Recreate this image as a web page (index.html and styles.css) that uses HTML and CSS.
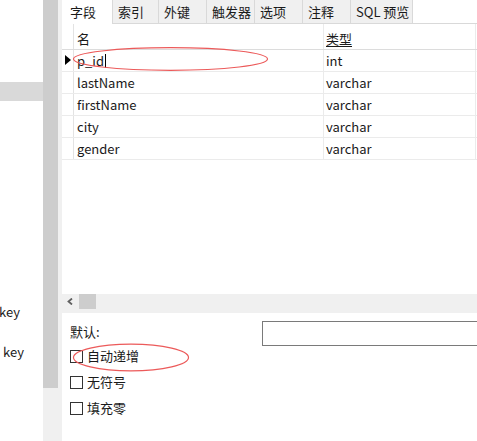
FILE: index.html
```html
<!DOCTYPE html>
<html>
<head>
<meta charset="utf-8">
<link rel="stylesheet" href="styles.css">
</head>
<body>
<div class="app">
  <div class="side">
    <div class="side-sel"></div>
    <div class="side-key k1">key</div>
    <div class="side-key k2">key</div>
  </div>
  <div class="vscroll"><div class="vthumb"></div></div>
  <div class="main">
    <div class="tabs">
      <div class="tab active">字段</div>
      <div class="tab t2">索引</div>
      <div class="tab t3">外键</div>
      <div class="tab t3">触发器</div>
      <div class="tab t3">选项</div>
      <div class="tab t3">注释</div>
      <div class="tab t4">SQL 预览</div>
      <div class="tab-rest"></div>
    </div>
    <div class="grid">
      <div class="row head">
        <div class="ind"></div>
        <div class="c-name">名</div>
        <div class="c-type"><span class="u">类型</span></div>
      </div>
      <div class="row">
        <div class="ind"><span class="tri"></span></div>
        <div class="c-name">p_id<span class="caret"></span></div>
        <div class="c-type">int</div>
      </div>
      <div class="row">
        <div class="ind"></div>
        <div class="c-name">lastName</div>
        <div class="c-type">varchar</div>
      </div>
      <div class="row">
        <div class="ind"></div>
        <div class="c-name">firstName</div>
        <div class="c-type">varchar</div>
      </div>
      <div class="row">
        <div class="ind"></div>
        <div class="c-name">city</div>
        <div class="c-type">varchar</div>
      </div>
      <div class="row">
        <div class="ind"></div>
        <div class="c-name">gender</div>
        <div class="c-type">varchar</div>
      </div>
    </div>
    <div class="hscroll">
      <svg class="harrow" width="6" height="7" viewBox="0 0 6 7"><path d="M5 0.5 L1.5 3.5 L5 6.5" fill="none" stroke="#606060" stroke-width="1.8"/></svg>
      <div class="hthumb"></div>
    </div>
    <div class="form">
      <div class="def-row">
        <div class="def-label">默认:</div>
        <div class="def-input"></div>
      </div>
      <label class="chk"><span class="box"></span>自动递增</label>
      <label class="chk"><span class="box"></span>无符号</label>
      <label class="chk"><span class="box"></span>填充零</label>
    </div>
  </div>
  <svg class="notes" width="477" height="441" viewBox="0 0 477 441">
    <ellipse cx="170.5" cy="59" rx="97" ry="11.3" fill="none" stroke="#ec5a5a" stroke-width="1.2"/>
    <ellipse cx="131" cy="357.5" rx="57.5" ry="13.3" fill="none" stroke="#ec5a5a" stroke-width="1.2"/>
  </svg>
</div>
</body>
</html>
```
FILE: styles.css
```css
html, body {
  margin: 0;
  padding: 0;
  background: #fff;
}
body {
  font-family: "Noto Sans CJK SC", "Noto Sans", sans-serif;
  font-size: 13px;
  color: #1a1a1a;
}
.app {
  position: relative;
  display: flex;
  width: 477px;
  height: 441px;
  overflow: hidden;
}
.side {
  width: 43px;
  flex: none;
  background: #fff;
  display: flex;
  flex-direction: column;
}
.side-sel {
  margin-top: 82px;
  height: 19px;
  background: #d9d9d9;
}
.side-key {
  line-height: 16px;
  height: 16px;
}
.k1 { margin-top: 203px; margin-left: -1px; }
.k2 { margin-top: 24px; margin-left: 3px; }
.vscroll {
  width: 19px;
  flex: none;
  background: #f0f0f0;
}
.vthumb {
  width: 15px;
  height: 388px;
  background: #cdcdcd;
}
.main {
  width: 415px;
  flex: none;
  display: flex;
  flex-direction: column;
  background: #fff;
}
.tabs {
  display: flex;
  height: 24px;
  flex: none;
}
.tab {
  box-sizing: border-box;
  height: 24px;
  line-height: 23px;
  padding-left: 8px;
  background: #f0f0f0;
  border-right: 1px solid #d9d9d9;
  border-bottom: 1px solid #d9d9d9;
}
.tab.active {
  width: 51px;
  background: #fff;
  border-right: 1px solid #d9d9d9;
  border-bottom: none;
}
.t2 { width: 46px; padding-left: 5px; }
.t3 { width: 48px; padding-left: 5px; }
.t4 { width: 62px; padding-left: 5px; }
.tab-rest {
  flex: 1;
  box-sizing: border-box;
  border-bottom: 1px solid #d9d9d9;
}
.grid {
  height: 136px;
  flex: none;
}
.row {
  display: flex;
  box-sizing: border-box;
  height: 22px;
  border-bottom: 1px solid #ebebeb;
}
.row.head {
  height: 26px;
  border-bottom: 1px solid #dcdcdc;
}
.ind {
  width: 11px;
  flex: none;
  border-right: 1px solid #e3e3e3;
  position: relative;
}
.tri {
  position: absolute;
  left: 3px;
  top: 5px;
  width: 0;
  height: 0;
  border-top: 5px solid transparent;
  border-bottom: 5px solid transparent;
  border-left: 6px solid #000;
}
.c-name {
  width: 250px;
  flex: none;
  padding-left: 3px;
  box-sizing: border-box;
  border-right: 1px solid #ebebeb;
  line-height: 21px;
  display: flex;
  align-items: center;
}
.c-type {
  width: 152px;
  flex: none;
  box-sizing: border-box;
  padding-left: 2px;
  border-right: 1px solid #ebebeb;
  line-height: 21px;
}
.head .c-name, .head .c-type {
  line-height: 29px;
}
.head .c-name { align-items: stretch; }
.u {
  text-decoration: underline;
  text-underline-offset: 2px;
}
.caret {
  display: inline-block;
  width: 1px;
  height: 14px;
  background: #000;
  margin-left: 1px;
}
.hscroll {
  margin-top: 134px;
  height: 19px;
  flex: none;
  background: #f0f0f0;
  display: flex;
  align-items: flex-start;
}
.harrow {
  margin: 4px 0 0 5px;
}
.hthumb {
  margin-left: 6px;
  width: 17px;
  height: 15px;
  background: #cdcdcd;
}
.form {
  padding-left: 8px;
  display: flex;
  flex-direction: column;
}
.def-row {
  display: flex;
  margin-top: 8px;
  height: 25px;
}
.def-label {
  width: 192px;
  line-height: 22px;
}
.def-input {
  flex: 1;
  box-sizing: border-box;
  border: 1px solid #7a7a7a;
  border-right: none;
  height: 25px;
}
.chk {
  display: flex;
  align-items: center;
  height: 26px;
  line-height: 16px;
}
.def-row + .chk { margin-top: -3px; }
.box {
  box-sizing: border-box;
  width: 13px;
  height: 13px;
  border: 1px solid #333;
  background: #fff;
  margin-right: 4px;
}
.notes {
  position: absolute;
  left: 0;
  top: 0;
  pointer-events: none;
}
```
